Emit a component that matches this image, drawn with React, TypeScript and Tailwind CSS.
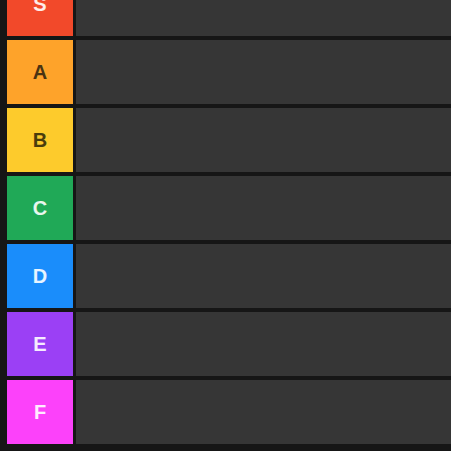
import React from 'react';

const tiers = [
  { label: 'S', bg: 'bg-[#f2492a]', text: 'text-white/90' },
  { label: 'A', bg: 'bg-[#fea32a]', text: 'text-[#4a3312]' },
  { label: 'B', bg: 'bg-[#fdcb2c]', text: 'text-[#4a3c0c]' },
  { label: 'C', bg: 'bg-[#20a957]', text: 'text-white/90' },
  { label: 'D', bg: 'bg-[#1a8dfb]', text: 'text-white/90' },
  { label: 'E', bg: 'bg-[#9b40f5]', text: 'text-white/90' },
  { label: 'F', bg: 'bg-[#fc41fa]', text: 'text-white/90' },
];

export default function App() {
  return (
    <div className="h-[451px] w-[451px] overflow-hidden bg-[#161616]">
      <div className="-mt-[28px] flex flex-col gap-[4px] pl-[7px]">
        {tiers.map((t) => (
          <div key={t.label} className="flex h-[64px] gap-[3px]">
            <div
              className={`flex w-[66px] shrink-0 items-center justify-center ${t.bg} ${t.text} text-[20px] font-bold`}
              style={{ fontFamily: '"Liberation Sans", Arial, sans-serif' }}
            >
              {t.label}
            </div>
            <div className="flex-1 bg-[#363636]" />
          </div>
        ))}
      </div>
    </div>
  );
}
